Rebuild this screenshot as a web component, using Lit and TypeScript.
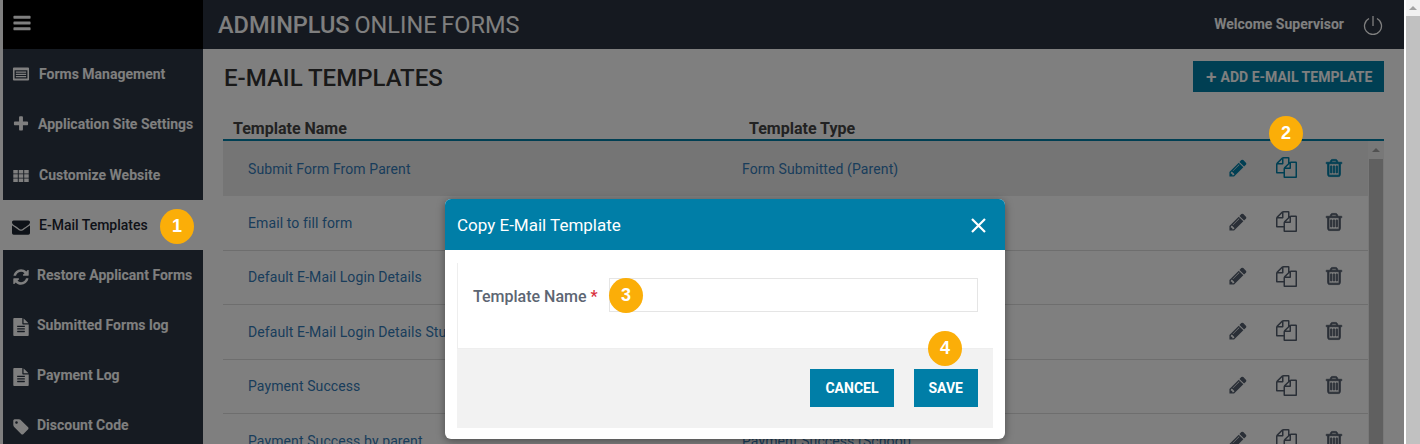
import { LitElement, html, css, svg } from "lit";
import { customElement } from "lit/decorators.js";

const P = {
  bars: "M1664 1344v128q0 26-19 45t-45 19h-1408q-26 0-45-19t-19-45v-128q0-26 19-45t45-19h1408q26 0 45 19t19 45zm0-512v128q0 26-19 45t-45 19h-1408q-26 0-45-19t-19-45v-128q0-26 19-45t45-19h1408q26 0 45 19t19 45zm0-512v128q0 26-19 45t-45 19h-1408q-26 0-45-19t-19-45v-128q0-26 19-45t45-19h1408q26 0 45 19t19 45z",
  plus: "M1600 736v192q0 40-28 68t-68 28h-416v416q0 40-28 68t-68 28h-192q-40 0-68-28t-28-68v-416h-416q-40 0-68-28t-28-68v-192q0-40 28-68t68-28h416v-416q0-40 28-68t68-28h192q40 0 68 28t28 68v416h416q40 0 68 28t28 68z",
  pencil: "M491 1536l91-91-235-235-91 91v107h128v128h107zm523-928q0-22-22-22-10 0-17 7l-542 542q-7 7-7 17 0 22 22 22 10 0 17-7l542-542q7-7 7-17zm-54-192l416 416-832 832h-416v-416zm683 96q0 53-37 90l-166 166-416-416 166-165q36-38 90-38 53 0 91 38l235 234q37 39 37 91z",
  trash: "M704 736v576q0 14-9 23t-23 9h-64q-14 0-23-9t-9-23v-576q0-14 9-23t23-9h64q14 0 23 9t9 23zm256 0v576q0 14-9 23t-23 9h-64q-14 0-23-9t-9-23v-576q0-14 9-23t23-9h64q14 0 23 9t9 23zm256 0v576q0 14-9 23t-23 9h-64q-14 0-23-9t-9-23v-576q0-14 9-23t23-9h64q14 0 23 9t9 23zm128 724v-948h-896v948q0 22 7 40.5t14.5 27 10.5 8.5h832q3 0 10.5-8.5t14.5-27 7-40.5zm-672-1076h448l-48-117q-7-9-17-11h-317q-10 2-17 11zm928 32v64q0 14-9 23t-23 9h-96v948q0 83-47 143.5t-113 60.5h-832q-66 0-113-58.5t-47-141.5v-952h-96q-14 0-23-9t-9-23v-64q0-14 9-23t23-9h309l70-167q15-37 54-63t79-26h320q40 0 79 26t54 63l70 167h309q14 0 23 9t9 23z",
  files: "M1696 384q40 0 68 28t28 68v1216q0 40-28 68t-68 28h-960q-40 0-68-28t-28-68v-288h-544q-40 0-68-28t-28-68v-672q0-40 20-88t48-76l408-408q28-28 76-48t88-20h416q40 0 68 28t28 68v328q68-40 128-40h416zm-544 213l-299 299h299v-299zm-640-384l-299 299h299v-299zm196 647l316-316v-416h-384v416q0 40-28 68t-68 28h-416v640h512v-256q0-40 20-88t48-76zm956 804v-1152h-384v416q0 40-28 68t-68 28h-416v640h896z",
  envelope: "M1792 710v794q0 66-47 113t-113 47h-1472q-66 0-113-47t-47-113v-794q44 49 101 87 362 246 497 345 57 42 92.5 65.5t94.5 48 110 24.5h2q51 0 110-24.5t94.5-48 92.5-65.5q170-123 498-345 57-39 100-87zm0-294q0 79-49 151t-122 123q-376 261-468 325-10 7-42.5 30.5t-54 38-52 32.5-57.5 27-50 9h-2q-23 0-50-9t-57.5-27-52-32.5-54-38-42.5-30.5q-91-64-262-182.5t-205-142.5q-62-42-117-115.5t-55-136.5q0-78 41.5-130t118.5-52h1472q65 0 112.5 47t47.5 113z",
  refresh: "M1639 1056q0 5-1 7-64 268-268 434.5t-478 166.5q-146 0-282.5-55t-243.5-157l-129 129q-19 19-45 19t-45-19-19-45v-448q0-26 19-45t45-19h448q26 0 45 19t19 45-19 45l-137 137q71 66 161 102t187 36q134 0 250-65t186-179q11-17 53-117 8-23 30-23h192q13 0 22.5 9.5t9.5 22.5zm25-800v448q0 26-19 45t-45 19h-448q-26 0-45-19t-19-45 19-45l138-138q-148-137-349-137-134 0-250 65t-186 179q-11 17-53 117-8 23-30 23h-199q-13 0-22.5-9.5t-9.5-22.5v-7q65-268 270-434.5t480-166.5q146 0 284 55.5t245 156.5l130-129q19-19 45-19t45 19 19 45z",
  file: "M1596 476q14 14 28 36h-472v-472q22 14 36 28zm-476 164h544v1056q0 40-28 68t-68 28h-1344q-40 0-68-28t-28-68v-1600q0-40 28-68t68-28h800v544q0 40 28 68t68 28zm160 736v-64q0-14-9-23t-23-9h-704q-14 0-23 9t-9 23v64q0 14 9 23t23 9h704q14 0 23-9t9-23zm0-256v-64q0-14-9-23t-23-9h-704q-14 0-23 9t-9 23v64q0 14 9 23t23 9h704q14 0 23-9t9-23zm0-256v-64q0-14-9-23t-23-9h-704q-14 0-23 9t-9 23v64q0 14 9 23t23 9h704q14 0 23-9t9-23z",
  tag: "M576 448q0-53-37.5-90.5t-90.5-37.5-90.5 37.5-37.5 90.5 37.5 90.5 90.5 37.5 90.5-37.5 37.5-90.5zm1067 576q0 53-37 90l-491 492q-39 37-91 37-53 0-90-37l-715-716q-38-37-64.5-101t-26.5-117v-416q0-52 38-90t90-38h416q53 0 117 26.5t102 64.5l715 714q37 39 37 91z",
  th: "M128 288h448v352h-448zM672 288h448v352h-448zM1216 288h448v352h-448zM128 720h448v352h-448zM672 720h448v352h-448zM1216 720h448v352h-448zM128 1152h448v352h-448zM672 1152h448v352h-448zM1216 1152h448v352h-448z",
  list: "M192 256h1408q96 0 96 96v1088q0 96-96 96h-1408q-96 0-96-96v-1088q0-96 96-96zM256 512v832h1280v-832zM384 640h1024v128h-1024zM384 864h1024v128h-1024zM384 1088h1024v128h-1024z",
};

const icon = (d: string, size = 16, cls = "") => html`<svg class="ic ${cls}" width=${size} height=${size} viewBox="0 0 1792 1792" fill="currentColor" fill-rule="evenodd">${svg`<path d=${d}></path>`}</svg>`;

const NAV = [
  { t: "Forms Management", i: P.list, gap: 9, dy: -1, up: true },
  { t: "Application Site Settings", i: P.plus, gap: 8, dy: -1, up: true },
  { t: "Customize Website", i: P.th, gap: 9, dy: 1 },
  { t: "E-Mail Templates", i: P.envelope, gap: 9, dy: 2, active: true },
  { t: "Restore Applicant Forms", i: P.refresh, gap: 7, dy: 2 },
  { t: "Submitted Forms log", i: P.file, gap: 7, dy: 2 },
  { t: "Payment Log", i: P.file, gap: 7, dy: 2 },
  { t: "Discount Code", i: P.tag, gap: 7, dy: 2 },
];

const ROWS = [
  ["Submit Form From Parent", "Form Submitted (Parent)"],
  ["Email to fill form", ""],
  ["Default E-Mail Login Details", ""],
  ["Default E-Mail Login Details Student", ""],
  ["Payment Success", ""],
  ["Payment Success by parent", "Payment Success (School)"],
];

@customElement("app-root")
export class AppRoot extends LitElement {
  static styles = css`
    :host { display: block; width: 1420px; height: 444px; overflow: hidden; font-family: Roboto, "Liberation Sans", sans-serif; position: relative; background: #fff; }
    * { box-sizing: border-box; }
    .win { display: flex; height: 444px; }
    .page { position: relative; width: 1404px; height: 444px; overflow: hidden; display: flex; background: #fff; padding-left: 3px; }
    .outer-sb { width: 16px; background: #f1f1f1; display: flex; flex-direction: column; border-left: 2px solid #fff; }
    .outer-sb .arrow { height: 16px; display: flex; align-items: center; justify-content: center; background: #f1f1f1; }
    .outer-sb .thumb { flex: 1; background: #c1c1c1; }
    .tri { width: 0; height: 0; border-left: 4px solid transparent; border-right: 4px solid transparent; border-bottom: 4px solid #a3a3a3; }

    .side { width: 200px; flex: none; background: #2d3744; color: #fff; }
    .burger { height: 49px; background: #000; display: flex; align-items: center; padding: 0 0 3px 9px; color: #fff; }
    .nav-item { height: 50px; display: flex; align-items: center; padding-left: 9px; font-size: 14px; font-weight: 700; }
    .nav-item.active { background: #fff; color: #1d2530; font-weight: 500; }
    .nav-first { margin-top: 1px; }
    .nav-item .txt { white-space: nowrap; }
    .nav-item .txt.up { margin-top: -2px; }
    .nav-item .wrap { display: flex; position: relative; }

    .main { flex: 1; display: flex; flex-direction: column; min-width: 0; background: #fff; }
    .top { height: 49px; flex: none; background: #2b3340; color: #fff; display: flex; align-items: center; padding: 0 21px 0 15px; }
    .brand { font-size: 23.5px; word-spacing: -1px; flex: 1; color: #fff; }
    .brand b { font-weight: 500; }
    .welcome { font-size: 14px; font-weight: 700; margin-right: 19px; padding-bottom: 1px; }
    .content { padding: 0 20px; flex: 1; min-height: 0; display: flex; flex-direction: column; }
    .head { display: flex; justify-content: space-between; align-items: center; height: 55px; flex: none; padding-left: 1px; }
    h1 { margin: 0; padding-top: 2px; font-size: 24px; font-weight: 500; color: #333; }
    .add { background: #007ea7; color: #fff; font-size: 14px; font-weight: 700; height: 31px; width: 191px; padding-left: 13px; display: flex; align-items: center; gap: 4px; }
    .add .pl { font-size: 19px; font-weight: 500; line-height: 1; }
    .thead { display: grid; grid-template-columns: 516px 1fr; height: 21px; flex: none; margin-top: 14px; border-bottom: 2px solid #007ea7; box-sizing: content-box; padding-left: 10px; font-size: 16px; font-weight: 700; color: #444; align-items: center; }
    .tbody { position: relative; flex: 1; min-height: 0; }
    .row { display: grid; grid-template-columns: 494px 1fr 48px 48px 48px; align-items: center; height: 54.5px; padding-left: 25px; padding-right: 26px; font-size: 14px; letter-spacing: .1px; color: #337ab7; border-bottom: 1px solid #ddd; }
    .row.hl { background: #ebebeb; border-bottom: 0; height: 55px; }
    .row.hl .ico { color: #007ea7; }
    .row .name { white-space: nowrap; }
    .ico { color: #555f6e; display: flex; justify-content: center; margin-top: -2px; }
    .ic.bold { stroke: currentColor; stroke-width: 70px; }
    .isb { position: absolute; right: 0; top: 0; bottom: 0; width: 16px; display: flex; flex-direction: column; align-items: center; background: #f1f1f1; padding: 0 1px; }
    .isb .arrow { height: 18px; display: flex; align-items: center; justify-content: center; }
    .isb .thumb { flex: 1; width: 100%; background: #c1c1c1; }

    .overlay { position: absolute; inset: 0; background: rgba(0,0,0,.5); }
    .modal { position: absolute; left: 445px; top: 199px; width: 560px; height: 240px; background: #fff; border-radius: 6px; overflow: hidden; box-shadow: 0 2px 8px rgba(0,0,0,.4); display: flex; flex-direction: column; }
    .m-head { height: 51px; background: #007ea7; color: #fff; display: flex; align-items: center; justify-content: space-between; padding: 1px 19px 0 12px; font-size: 17px; flex: none; }
    .m-body { margin: 13px 12px 0; border-left: 1px solid #eee; height: 85px; padding: 15px 15px 0 15px; display: flex; flex: none; }
    .lbl { font-size: 16px; font-weight: 500; color: #5d6673; width: 136px; height: 34px; line-height: 37px; white-space: nowrap; }
    .lbl i { font-style: normal; color: #d9303d; }
    input { flex: 1; height: 34px; border: 1px solid #e5e5e5; background: #fff; outline: none; padding: 0 8px; }
    .m-foot { margin: 0 12px; height: 80px; background: #f2f2f2; border-top: 1px solid #eee; display: flex; justify-content: flex-end; align-items: flex-start; gap: 20px; padding: 20px 15px 0 0; }
    button { border: 0; background: #007ea7; color: #fff; font: 700 14px Roboto, sans-serif; height: 38px; padding: 0 15px; }
    .badge { position: absolute; width: 34px; height: 35px; border-radius: 50%; background: #fbae08; color: #fff; font: 700 18px "Liberation Sans", Arial, sans-serif; display: flex; align-items: center; justify-content: center; }
  `;

  render() {
    return html`<div class="win">
      <div class="page">
        <aside class="side">
          <div class="burger">${icon(P.bars, 20)}</div>
          ${NAV.map((n, i) => html`<div class="nav-item ${n.active ? "active" : ""} ${i === 0 ? "nav-first" : ""}">
            <span class="wrap" style="top:${n.dy}px;margin-right:${n.gap}px">${icon(n.i, 18)}</span><span class="txt ${n.up ? "up" : ""}">${n.t}</span></div>`)}
        </aside>
        <div class="main">
          <header class="top">
            <div class="brand"><b>ADMINPLUS</b> ONLINE FORMS</div>
            <div class="welcome">Welcome Supervisor</div>
            <svg width="20" height="20" viewBox="0 0 20 20" fill="none" stroke="currentColor" stroke-width="1.3"><path d="M6 3.5A8.5 8.5 0 1 0 14 3.5"></path><path d="M10 1v10"></path></svg>
          </header>
          <div class="content">
            <div class="head"><h1>E-MAIL TEMPLATES</h1><div class="add"><span class="pl">+</span>ADD E-MAIL TEMPLATE</div></div>
            <div class="thead"><div>Template Name</div><div>Template Type</div></div>
            <div class="tbody">
              ${ROWS.map((r, i) => html`<div class="row ${i === 0 ? "hl" : ""}">
                <div class="name">${r[0]}</div><div>${r[1]}</div>
                <div class="ico">${icon(P.pencil, 20)}</div>
                <div class="ico">${icon(P.files, 21)}</div>
                <div class="ico">${icon(P.trash, 20, "bold")}</div>
              </div>`)}
              <div class="isb"><div class="arrow"><div class="tri"></div></div><div class="thumb"></div></div>
            </div>
          </div>
        </div>
        <div class="overlay"></div>
        <div class="modal">
          <div class="m-head"><span>Copy E-Mail Template</span>
            <svg width="15" height="15" viewBox="0 0 15 15" stroke="#fff" stroke-width="2.2"><path d="M1 1l13 13M14 1L1 14"></path></svg></div>
          <div class="m-body"><div class="lbl">Template Name <i>*</i></div><input /></div>
          <div class="m-foot"><button>CANCEL</button><button>SAVE</button></div>
        </div>
        <div class="badge" style="left:160px;top:209px">1</div>
        <div class="badge" style="left:1269px;top:116px">2</div>
        <div class="badge" style="left:609px;top:278px">3</div>
        <div class="badge" style="left:928px;top:331px">4</div>
      </div>
      <div class="outer-sb"><div class="arrow"><div class="tri"></div></div><div class="thumb"></div></div>
    </div>`;
  }
}
